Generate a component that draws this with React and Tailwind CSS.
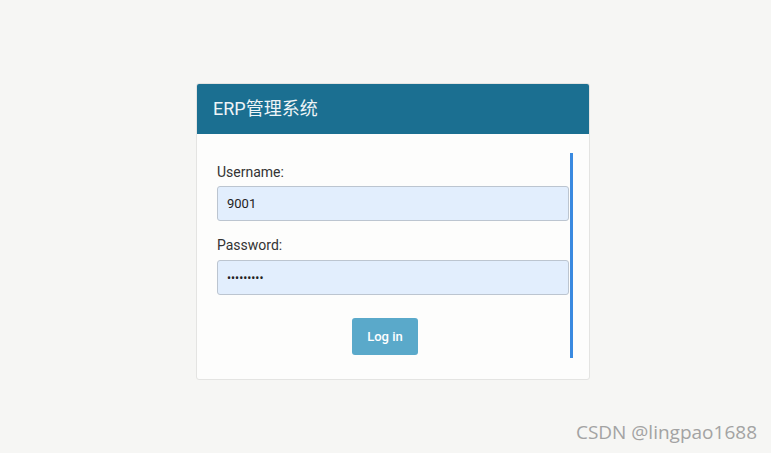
import React from "react";

const App = () => {
  return (
    <div
      className="min-h-[453px] w-full bg-[#f6f6f4] pt-[83px] relative"
      style={{ fontFamily: "Roboto, 'Noto Sans CJK SC', sans-serif" }}
    >
      <div className="ml-[196px] w-[394px] rounded-[3px] border border-[#e4e4e2] bg-[#fdfdfc] overflow-hidden">
        {/* Header */}
        <div className="h-[50px] bg-[#1b6f91] px-[16px] flex items-center">
          <h1 className="text-[18px] text-[#eef4f7] font-normal leading-none">ERP管理系统</h1>
        </div>

        {/* Body */}
        <div className="pt-[19px] pb-[21px] pl-[20px] pr-[16px]">
          <div className="border-r-[3px] border-[#3a8ae0] pt-[9px] pb-[2px] h-[205px]">
            <label className="block text-[14px] leading-[20px] text-[#333]">Username:</label>
            <div className="mt-[4px] h-[35px] w-[352px] rounded-[3px] border border-[#bcc5d0] bg-[#e2eefd] px-[9px] flex items-center text-[13px] text-[#222]">
              9001
            </div>

            <label className="block mt-[14px] text-[14px] leading-[20px] text-[#333]">Password:</label>
            <div className="mt-[5px] h-[35px] w-[352px] rounded-[3px] border border-[#bcc5d0] bg-[#e2eefd] px-[9px] flex items-center text-[12px] text-[#222]">
              •••••••••
            </div>

            <div className="mt-[23px] pl-[135px]">
              <button className="h-[37px] w-[66px] rounded-[3px] bg-[#5aa9ca] text-[13px] text-white font-medium">
                Log in
              </button>
            </div>
          </div>
        </div>
      </div>

      {/* Watermark */}
      <div
        className="absolute right-[14px] top-[418px] text-[19px] text-[#a3a3a3]"
        style={{ fontFamily: "'Open Sans', sans-serif" }}
      >
        CSDN @lingpao1688
      </div>
    </div>
  );
};

export default App;
